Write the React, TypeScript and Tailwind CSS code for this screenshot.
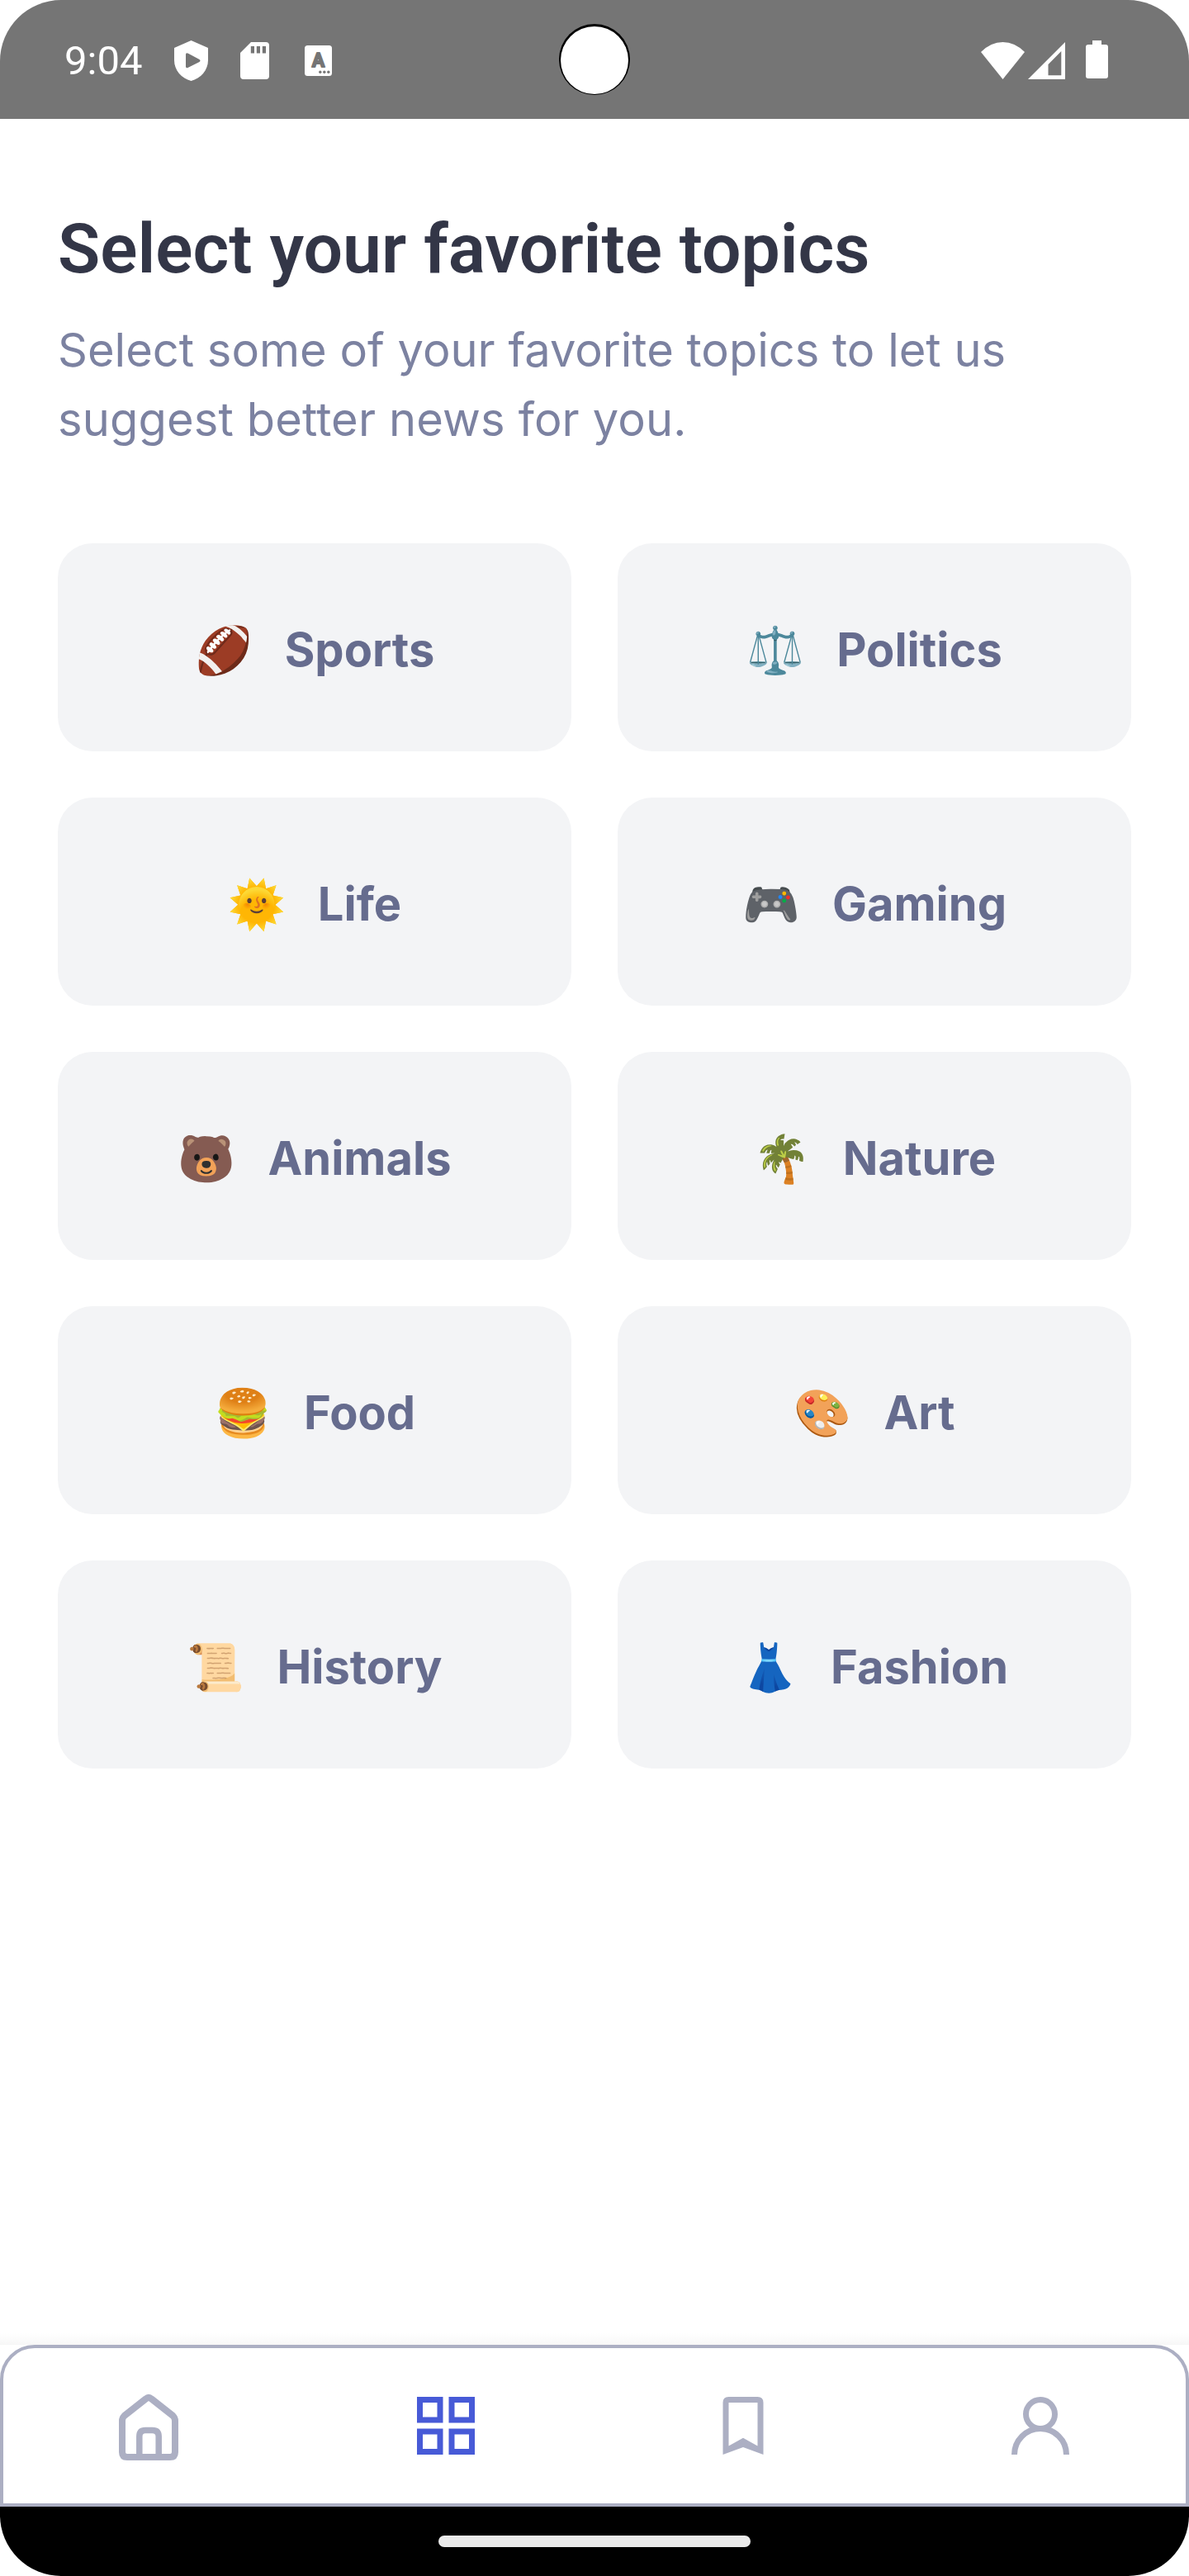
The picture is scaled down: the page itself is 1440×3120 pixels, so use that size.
import React from "react";

const topics = [
  { emoji: "🏈", label: "Sports" },
  { emoji: "⚖️", label: "Politics" },
  { emoji: "🌞", label: "Life" },
  { emoji: "🎮", label: "Gaming" },
  { emoji: "🐻", label: "Animals" },
  { emoji: "🌴", label: "Nature" },
  { emoji: "🍔", label: "Food" },
  { emoji: "🎨", label: "Art" },
  { emoji: "📜", label: "History" },
  { emoji: "👗", label: "Fashion" },
];

function StatusBar() {
  return (
    <header className="relative flex h-[144px] shrink-0 items-center justify-between bg-[#757575] text-white">
      <div className="flex items-center pl-[78px]">
        <span className="w-[133px] pt-[3px] font-['Roboto'] text-[49px] leading-[57px]">9:04</span>
        <svg className="mt-[2px] mr-[39px] h-[49px] w-[41px]" viewBox="0 0 41 49" fill="currentColor">
          <path
            fillRule="evenodd"
            d="M20.500 0 41 9V24C41 36 32 46 20.500 49 9 46 0 36 0 24V9ZM14 17V31.500Q14 34 16.500 33L30.500 26Q32.500 24.500 30.500 23L17 15.700Q14 14.500 14 17Z"
          />
        </svg>
        <svg className="mt-[2px] mr-[43px] h-[45px] w-[35px]" viewBox="0 0 35 45" fill="currentColor">
          <path
            fillRule="evenodd"
            d="M13 0H31Q35 0 35 4V41Q35 45 31 45H4Q0 45 0 41V13ZM12.800 5V13.500H17V5ZM19.800 5V13.500H24V5ZM26.800 5V13.500H31V5Z"
          />
        </svg>
        <svg className="mt-[3px] h-[37px] w-[33px]" viewBox="0 0 33 37">
          <rect width="33" height="37" rx="3.500" fill="#fff" />
          <text
            x="16.500"
            y="26"
            textAnchor="middle"
            fill="#757575"
            stroke="#757575"
            strokeWidth="1.800"
            strokeLinejoin="round"
            className="font-['Roboto'] text-[23px] font-bold"
          >
            A
          </text>
          <circle cx="18.800" cy="32.300" r="1.700" fill="#757575" />
          <circle cx="23.800" cy="32.300" r="1.700" fill="#757575" />
          <circle cx="28.800" cy="32.300" r="1.700" fill="#757575" />
        </svg>
      </div>

      <div className="absolute top-[29px] left-[677px] size-[86px] rounded-full bg-black px-[2px] pt-[3px]">
        <div className="size-[82px] rounded-full bg-white" />
      </div>

      <div className="flex items-center pr-[98px]">
        <svg className="mt-[2px] mr-[4px] h-[45px] w-[53px]" viewBox="0 0 53 45" fill="currentColor">
          <path d="M0 12Q12 0 26.500 0T53 12L26.500 45Z" />
        </svg>
        <svg className="mt-[2px] mr-[25px] h-[45px] w-[45px]" viewBox="0 0 45 45" fill="currentColor">
          <path fillRule="evenodd" d="M45 0V45H0ZM40.300 11 24.500 27V40.300H40.300Z" />
        </svg>
        <svg className="h-[46px] w-[27px]" viewBox="0 0 27 46" fill="currentColor">
          <path d="M8 0H19V5H24Q27 5 27 8V43Q27 46 24 46H3Q0 46 0 43V8Q0 5 3 5H8Z" />
        </svg>
      </div>
    </header>
  );
}

function TopicCard({ emoji, label }: { emoji: string; label: string }) {
  return (
    <button className="flex h-[252px] items-center justify-center gap-[39px] rounded-[42px] bg-[#f3f4f6] pt-[6px] font-['Inter'] text-[56px] leading-[84px] font-bold text-[#666c8e]">
      <span className="w-[70px] text-center font-normal">{emoji}</span>
      <span>{label}</span>
    </button>
  );
}

function NavItem({ active, children }: { active?: boolean; children: React.ReactNode }) {
  return (
    <button className={active ? "flex items-center justify-center text-[#475ad7]" : "flex items-center justify-center text-[#acafc3]"}>
      <svg className="size-[84px]" viewBox="0 0 84 84" fill="none" stroke="currentColor" strokeWidth="7">
        {children}
      </svg>
    </button>
  );
}

function BottomNav() {
  return (
    <nav className="h-[196px] shrink-0 rounded-t-[42px] border-4 border-[#acafc3] bg-white">
      <div className="-mx-1 grid h-full grid-cols-4">
        <NavItem>
          <path
            strokeWidth="8"
            strokeLinejoin="round"
            d="M10 36Q10 32.500 12.500 30L38.500 9.500Q42 6.500 45.500 9.500L71.500 30Q74 32.500 74 36V74Q74 80 68 80H16Q10 80 10 74Z"
          />
          <path strokeWidth="7.500" d="M30.800 80V55Q30.800 47.500 38 47.500H46.500Q54.200 47.500 54.200 55V80" />
        </NavItem>
        <NavItem active>
          <rect x="10.500" y="10.500" width="24.500" height="24.500" />
          <rect x="49" y="10.500" width="24.500" height="24.500" />
          <rect x="10.500" y="49" width="24.500" height="24.500" />
          <rect x="49" y="49" width="24.500" height="24.500" />
        </NavItem>
        <NavItem>
          <path
            fill="currentColor"
            stroke="none"
            fillRule="evenodd"
            d="M17.500 77V14Q17.500 7 24.500 7H59.500Q66.500 7 66.500 14V77L42 68ZM24.500 14V66.500L42 56.800 59.500 66.500V14Z"
          />
        </NavItem>
        <NavItem>
          <circle cx="42" cy="28" r="17.500" />
          <path d="M10.500 77A31.500 31.500 0 0 1 73.500 77" />
        </NavItem>
      </div>
    </nav>
  );
}

export default function App() {
  return (
    <div className="h-[3120px] w-[1440px] bg-white">
      <div className="flex h-full w-full flex-col overflow-hidden rounded-[74px] bg-white">
        <StatusBar />
        <main className="flex min-h-0 flex-1 flex-col px-[70px] pt-[109px]">
          <h1 className="font-['Roboto'] text-[84px] leading-[98px] font-semibold text-[#333647]">
            Select your favorite topics
          </h1>
          <p className="mt-[31px] font-['Inter'] text-[56px] leading-[84px] whitespace-nowrap text-[#7c82a1]">
            Select some of your favorite topics to let us
            <br />
            <span className="tracking-[0.15px]">suggest better news for you.</span>
          </p>
          <div className="mt-[108px] grid grid-cols-2 gap-[56px]">
            {topics.map((topic) => (
              <TopicCard key={topic.label} emoji={topic.emoji} label={topic.label} />
            ))}
          </div>
        </main>
        <div className="h-[14px] shrink-0 bg-linear-to-b from-white to-[#f7f7f7]" />
        <BottomNav />
        <footer className="flex h-[84px] shrink-0 items-center justify-center bg-black">
          <div className="h-[14px] w-[378px] rounded-full bg-[#eaeaea]" />
        </footer>
      </div>
    </div>
  );
}
